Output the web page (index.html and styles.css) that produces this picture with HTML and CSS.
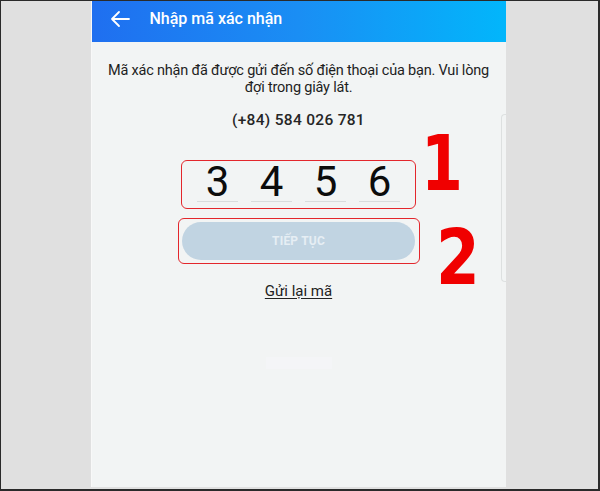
FILE: index.html
```html
<!DOCTYPE html>
<html lang="vi">
<head>
  <meta charset="UTF-8">
  <meta name="viewport" content="width=device-width, initial-scale=1.0">
  <title>Nhập mã xác nhận</title>
  <link rel="stylesheet" href="styles.css">
</head>
<body>
  <div class="frame">
    <div class="screen">
      <div class="header">
        <svg class="back" width="22" height="20" viewBox="0 0 22 20">
          <path d="M20 10H3M10 3L3 10L10 17" fill="none" stroke="#fff" stroke-width="1.8" stroke-linecap="round" stroke-linejoin="round"/>
        </svg>
        <div class="title">Nhập mã xác nhận</div>
      </div>

      <div class="content">
        <p class="desc">Mã xác nhận đã được gửi đến số điện thoại của bạn. Vui lòng đợi trong giây lát.</p>
        <div class="phone">(+84) 584 026 781</div>

        <div class="mark code-box">
          <span class="digit">3</span>
          <span class="digit">4</span>
          <span class="digit">5</span>
          <span class="digit">6</span>
          <span class="step step-1">1</span>
        </div>

        <div class="mark btn-box">
          <button class="btn" disabled>TIẾP TỤC</button>
          <span class="step step-2">2</span>
        </div>

        <a href="#" class="resend">Gửi lại mã</a>

        <div class="ghost"></div>
      </div>

      <div class="scroll"></div>
    </div>
  </div>
</body>
</html>
```

FILE: styles.css
```css
html, body {
  margin: 0;
  height: 100%;
}

body {
  font-family: Roboto, 'Noto Sans', sans-serif;
  color: #1e1e1e;
}

.frame {
  box-sizing: border-box;
  width: 600px;
  height: 491px;
  background: #e0e0e0;
  border: 1px solid #2a2a2a;
  border-bottom-width: 2px;
  border-right-width: 2px;
  display: flex;
  justify-content: center;
}

.screen {
  position: relative;
  width: 414px;
  margin-left: -3px;
  margin-bottom: 2px;
  background: #f2f4f4;
  border-left: 1px solid #f8f8f8;
  display: flex;
  flex-direction: column;
}

.header {
  height: 41px;
  background: linear-gradient(90deg, #1f6ff0 0%, #1a8ef4 50%, #02b6fb 100%);
  display: flex;
  align-items: center;
  padding-left: 17px;
  color: #fff;
}

.back {
  margin-top: -6px;
}

.title {
  margin-left: 19px;
  margin-top: -6px;
  font-size: 16px;
  font-weight: 500;
}

.content {
  display: flex;
  flex-direction: column;
  align-items: center;
}

.desc {
  margin: 20px 14px 0;
  font-size: 14.5px;
  line-height: 17px;
  letter-spacing: -0.2px;
  text-align: center;
}

.phone {
  margin-top: 15px;
  font-size: 15.5px;
  line-height: 18px;
  font-weight: 500;
  letter-spacing: 0.3px;
  color: #262626;
}

.mark {
  position: relative;
  border: 1.5px solid #e3262c;
  border-radius: 6px;
}

.code-box {
  margin-top: 31px;
  width: 233px;
  padding: 2px 0 6px;
  display: flex;
  justify-content: center;
  gap: 13px;
}

.digit {
  width: 41px;
  height: 38px;
  line-height: 38px;
  font-size: 42px;
  text-align: center;
  color: #0c0c0c;
  border-bottom: 1px solid #d9dcdd;
}

.btn-box {
  margin-top: 9px;
  padding: 2.5px 3.5px 3.5px;
}

.btn {
  display: block;
  width: 233px;
  height: 38px;
  border: none;
  border-radius: 19px;
  background: #c1d4e2;
  color: #e6eef4;
  font-family: Roboto, sans-serif;
  font-size: 12px;
  font-weight: 700;
  letter-spacing: 0.2px;
}

.step {
  position: absolute;
  font-family: 'DejaVu Sans Condensed', 'DejaVu Sans', sans-serif;
  font-weight: 700;
  font-size: 76px;
  line-height: 76px;
  color: #f00000;
  transform: scaleX(0.88);
  transform-origin: left top;
}

.step-1 {
  left: 100%;
  top: -35px;
  margin-left: 6px;
}

.step-2 {
  left: 100%;
  top: 1px;
  margin-left: 17px;
  transform: scaleX(0.92);
}

.resend {
  margin-top: 18px;
  font-size: 15px;
  line-height: 18px;
  color: #222;
  text-decoration: underline;
  text-underline-offset: 2px;
}

.ghost {
  margin-top: 57px;
  width: 66px;
  height: 12px;
  background: #f4f5f7;
}

.scroll {
  position: absolute;
  right: 0;
  top: 113px;
  width: 4px;
  height: 166px;
  border: 1px solid #dde0e0;
  border-right: none;
  border-radius: 4px 0 0 4px;
}
```
